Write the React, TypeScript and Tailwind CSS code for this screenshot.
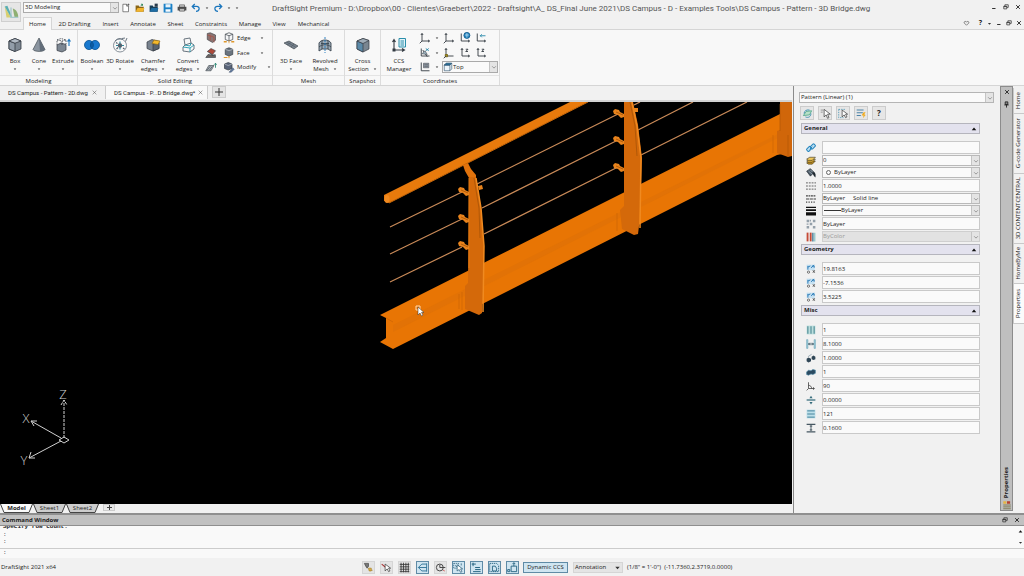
import { ReactNode, useState } from 'react'

interface IconProps {
  name: string
  className?: string
}

const INK = '#333a42'
const STEEL = '#7d8792'
const BLUE = '#1b76bd'

const glyphs: Record<string, ReactNode> = {
  box: (
    <g stroke={INK} strokeWidth="0.8" strokeLinejoin="round">
      <path d="M2 4l6-2.5L14 4v8l-6 2.5L2 12z" fill={STEEL} />
      <path d="M2 4l6 2.2v8.3L2 12z" fill="#929da9" />
      <path d="M2 4l6-2.5L14 4 8 6.2z" fill="#b3bcc6" />
    </g>
  ),
  cone: (
    <g>
      <path d="M8 1l6 11.5C13 15 3 15 2 12.5z" fill="#8b95a0" stroke={INK} strokeWidth="0.6" />
      <path d="M8 1l1 13.3c3 0 4.600-.8 5-1.800z" fill="#626d79" />
    </g>
  ),
  extrude: (
    <g>
      <path d="M2 8l4-2 5 1.500v5.500l-4 2-5-1.500z" fill={STEEL} stroke={INK} strokeWidth="0.7" />
      <path d="M2 8V3l4-1.500L11 3v4M7 4v5M2 3l5 1 4-1" fill="none" stroke={INK} strokeWidth="0.8" strokeDasharray="1.500 1" />
      <path d="M14 9V3M12.500 4.500L14 2.500l1.500 2" fill="none" stroke={BLUE} strokeWidth="1.100" />
    </g>
  ),
  boolean: (
    <g fill="#1878ce" stroke="#07508f" strokeWidth="0.8">
      <ellipse cx="5" cy="8" rx="4.500" ry="4.600" />
      <ellipse cx="11" cy="8" rx="4.500" ry="4.600" />
      <path d="M8 4.800c-2 2-2 4.600 0 6.500 2-2 2-4.500 0-6.500z" fill="#0b5ca5" />
    </g>
  ),
  rotate: (
    <g fill="none">
      <circle cx="8" cy="8.500" r="6.500" stroke="#6b7681" strokeWidth="0.8" />
      <path d="M3 4a6.500 6.500 0 0 1 8-1.500M13.500 4.500L15 1M10 1.500l3-.5" stroke="#6b7681" />
      <path d="M4 8.500h8M8 4.500v8" stroke="#2a8fa3" strokeWidth="1.200" />
      <circle cx="8" cy="8.500" r="2.200" fill="#56616d" />
      <path d="M4 5.500l1.500 1M11 11l1.500 1M4.500 12l1.500-1.500" stroke="#56616d" strokeWidth="1.200" />
    </g>
  ),
  chamfer: (
    <g stroke={INK} strokeWidth="0.7" strokeLinejoin="round">
      <path d="M2 5l5-2.500 7 2v7l-6 2.500-6-2.500z" fill="#78828e" />
      <path d="M8 7v7l6-2.500V6z" fill="#59636f" />
      <path d="M7 6.500L9 3l6 1-2 3.500z" fill="#f5b92b" stroke="#8d681a" />
    </g>
  ),
  convert: (
    <g fill="none" strokeWidth="0.9">
      <path d="M4 2l6-1 1 5-6 2zM5 8l-2 2v4l7 1 4-3V8l-3-2" stroke="#5a6672" />
      <path d="M3 10l7 1 4-3M10 11v4M5 8l5 1 1-3" stroke="#1d9aae" />
    </g>
  ),
  chamferSmall: (
    <g stroke={INK} strokeWidth="0.8">
      <path d="M3 2l4-1 7 3v7l-4 3-7-4z" fill="#8c7472" />
      <path d="M7 5l5 2v7M3 4l4 1v6" fill="none" stroke="#b34435" />
    </g>
  ),
  shell: (
    <g stroke={INK} strokeWidth="0.8">
      <path d="M1 14l3-4 10 1v3z" fill="#6c625f" />
      <path d="M3 6l5-4 6 3-4 5z" fill="#ae493a" />
      <path d="M5 7l5 4 4-1" fill="none" />
    </g>
  ),
  slab: (
    <g stroke={INK} strokeWidth="0.8">
      <path d="M1 13l4-7h7l-4 7z" fill="#aab1b9" />
      <path d="M3 12l4-5M6 12l4-5" fill="none" />
      <path d="M14 9V3M12 5l2-2 1.500 2" fill="none" stroke="#20806c" strokeWidth="1.100" />
    </g>
  ),
  edge: (
    <g>
      <path d="M3 3l5-2 5 2v7l-5 2-5-2zM3 3l5 2 5-2M8 5v7" fill="#f5f6f7" stroke={INK} strokeWidth="0.9" />
      <path d="M1 13h4M11 13h4" stroke="#e0972b" strokeWidth="2" />
      <path d="M8 11v4" stroke="#e0972b" />
    </g>
  ),
  face: (
    <g>
      <path d="M3 3l5-2 5 2v7l-5 2-5-2z" fill="#6a747f" stroke={INK} strokeWidth="0.9" />
      <path d="M3 3l5 2 5-2" fill="none" stroke="#ccd2d8" strokeWidth="0.8" />
      <path d="M1 14h5M8 12v3" stroke="#e0972b" strokeWidth="1.500" />
    </g>
  ),
  modify: (
    <g>
      <path d="M2 4l5-2 5 2v6l-5 2-5-2z" fill="#59657a" stroke={INK} strokeWidth="0.9" />
      <path d="M2 4l5 2 5-2" fill="none" stroke="#ccd2d8" strokeWidth="0.8" />
      <path d="M8 15l5-6 2 2-4 4z" fill="#60789c" stroke="#34435d" strokeWidth="0.5" />
    </g>
  ),
  face3d: (
    <g stroke={INK} strokeWidth="0.6">
      <path d="M1 6l5-2 9 5-4 3z" fill="#77828d" />
      <path d="M3.500 5l9 5M8 5.500L4 8M11 7l-3 3" fill="none" stroke="#4f5963" />
    </g>
  ),
  revolved: (
    <g stroke="#3b4650" strokeWidth="0.9">
      <path d="M2 6c2-4 10-4 12 0v8l-3-2H5l-3 2z" fill="#9caab6" />
      <path d="M5 3.500V12M11 3.500V12M2 10c3-3 9-3 12 0M4 6.500h8" fill="none" />
      <path d="M8 0v16" stroke={BLUE} strokeDasharray="2 1" />
    </g>
  ),
  section: (
    <g stroke={INK} strokeWidth="0.7" strokeLinejoin="round">
      <path d="M2 4l6-2.500 6 2v8.500l-6 3-6-3z" fill="#7a8691" />
      <path d="M2 4l6 2.500V15l-6-3z" fill="#5b8aa9" />
      <path d="M2 4l6-2.500 6 2L8 6.500z" fill="#a0adb8" />
    </g>
  ),
  ccs: (
    <g fill="none">
      <path d="M3 14V3M1.500 5L3 2.500 4.500 5M3 13h10M11 11.500l2.500 1.500-2.500 1.500" stroke={INK} strokeWidth="1.100" />
      <path d="M1.500 11.500h3v3h-3z" fill={INK} />
      <path d="M8 1.500h6.500V10H8z" fill="#e4f3f9" stroke="#2a8fab" />
      <path d="M9.500 4H13M9.500 6H13M9.500 8H13" stroke="#2a8fab" />
    </g>
  ),
  axes: (
    <g fill="none" stroke={INK} strokeWidth="1.200">
      <path d="M4 12V2M2.500 4L4 2l1.500 2M4 12h10M12 10.500l2 1.500-2 1.500M4 12l-3 3" />
    </g>
  ),
  axesGlobe: (
    <g fill="none" stroke={INK} strokeWidth="1.200">
      <path d="M3 12V2M3 12h11M12 10.500l2 1.500-2 1.500" />
      <circle cx="10.500" cy="4.500" r="4" fill="#2587c2" stroke="#175f8d" />
      <path d="M8 4h5M10.500 1.500v6" stroke="#e2f1fa" strokeWidth="0.8" />
    </g>
  ),
  axesBack: (
    <g fill="none" stroke={INK} strokeWidth="1.200">
      <path d="M3 12V2M3 12h11M12 10.500l2 1.500-2 1.500" />
      <path d="M14 5H7M9 3L7 5l2 2" stroke="#2487a8" />
    </g>
  ),
  axesView: (
    <g fill="none" stroke={INK} strokeWidth="1.200">
      <path d="M3 12V2M3 12h11M5 4l6 9" />
      <path d="M9 2l4 3M13 2L9 5" stroke="#2487a8" />
      <path d="M4 9l4-4 3 5z" fill="#9db3bf" strokeWidth="0.700" />
    </g>
  ),
  axesGold: (
    <g fill="none" stroke={INK} strokeWidth="1.200">
      <path d="M4 12V2M2.500 4L4 2l1.500 2M4 12h10" />
      <path d="M3 10h3v3H3z" fill="#a58f24" stroke="#776817" />
      <path d="M4 12l-3 3" />
    </g>
  ),
  axesZ: (
    <g fill="none" stroke={INK} strokeWidth="1.200">
      <path d="M4 12V2M2.500 4L4 2l1.500 2M4 12h10M12 10.500l2 1.500-2 1.500M9 3h3L9 6h3" />
    </g>
  ),
  axesList: (
    <g fill="none" stroke={INK} strokeWidth="1.200">
      <path d="M3 13V2M3 13h11" />
      <path d="M6 3h7v6H6z" fill="#9ba5af" strokeWidth="0.700" />
      <path d="M7 5h5M7 7h5" strokeWidth="0.700" />
    </g>
  ),
  cubeTop: (
    <g stroke="#31536f" strokeWidth="1">
      <path d="M2 5l3-3h9v9l-3 3H2z" fill="#eef5fa" />
      <path d="M2 5l3-3h9l-3 3z" fill="#2478a8" />
      <path d="M11 5v9M2 5h9" fill="none" />
    </g>
  ),
  fileNew: (
    <g fill="#fff" stroke="#444" strokeWidth="1">
      <path d="M3 2h6l3 3v9H3z" />
      <path d="M9 2v3h3M12 1v3M10.500 2.500h3" fill="none" />
    </g>
  ),
  open: (
    <g>
      <path d="M1 14V4h5l1 2h7v8z" fill="#8a6516" />
      <path d="M1 14l3-6h11l-2 6z" fill="#f2b42e" />
      <path d="M9 5l3-3m0 0H9.500M12 2v2.500" stroke="#1a7a49" strokeWidth="1.300" />
    </g>
  ),
  openBlue: (
    <g>
      <path d="M1 14V4h5l1 2h7v8z" fill="#173d57" />
      <path d="M1 14l3-6h11l-2 6z" fill="#1e6ca3" />
      <path d="M9 1h5v5H9z" fill="#2a3b4b" />
    </g>
  ),
  save: (
    <g>
      <path d="M1 1h13l1 1v13H1z" fill="#1b80c6" />
      <path d="M4 2h8v5H4z" fill="#e7f3fb" />
      <path d="M4 10h8v4H4z" fill="#f6fafd" />
    </g>
  ),
  print: (
    <g>
      <path d="M4 3h8v4H4z" fill="#d0d0d0" stroke="#444" />
      <path d="M1 6h14v6H1z" fill="#4a4a4a" />
      <path d="M4 9h8v4H4z" fill="#c8c8c8" stroke="#444" />
    </g>
  ),
  undo: <path d="M6 1.500L2 5.500l4 4M2.500 5.500H9c6 0 5 8-1 8" fill="none" stroke={BLUE} strokeWidth="2" />,
  redo: <path d="M10 1.500l4 4-4 4M13.500 5.500H7c-6 0-5 8 1 8" fill="none" stroke={BLUE} strokeWidth="2" />,
  minimize: <path d="M3 12h9" stroke="#222" strokeWidth="2.500" />,
  restore: (
    <g fill="none" stroke="#222" strokeWidth="1.800">
      <path d="M5 6V2h9v7h-4" />
      <path d="M2 6h8v7H2z" />
      <path d="M2 7h8" />
    </g>
  ),
  close: <path d="M3 3l10 10M13 3L3 13" stroke="#222" strokeWidth="2.400" />,
  closeThin: <path d="M2 2l12 12M14 2L2 14" stroke="#444" strokeWidth="1.500" />,
  heart: <path d="M8 12L3 7c-2-4 4-5 5-2 1-3 7-2 5 2z" fill="none" stroke="#444" strokeWidth="1.400" />,
  caret: <path d="M3 6h10l-5 6z" fill="#333" />,
  caretUp: <path d="M2 11h12L8 4z" fill="#111" />,
  chevron: <path d="M3 6l5 5 5-5" fill="none" stroke="#666" strokeWidth="1.600" />,
  pin: (
    <g stroke="#222" strokeWidth="2">
      <path d="M5 2h6v6H5z" fill="#888" />
      <path d="M3 9h10M8 9v6" />
    </g>
  ),
  quick: (
    <g>
      <path d="M2 11l4-6 8-1-3 6z" fill="#b9e0c7" stroke="#349b79" />
      <path d="M5 13c5 2 8-1 8-5M3 8c0-4 4-6 8-5" fill="none" stroke="#2a86ab" strokeWidth="1.200" />
    </g>
  ),
  pick: (
    <g stroke="#333">
      <path d="M1 3h4M1 6h3" stroke="#777" />
      <path d="M6 2v11l3-3 2 5 2-1-2-5h4z" fill="#fff" />
    </g>
  ),
  pickWindow: (
    <g stroke="#333">
      <path d="M1 2h9M1 2v12h7" fill="none" stroke="#2a86ab" strokeDasharray="2 1.500" />
      <path d="M6 3v10l3-3 2 4 2-1-2-4h3z" fill="#fff" />
    </g>
  ),
  filter: (
    <g>
      <path d="M1 3h10M1 7h9M1 11h6" stroke="#4c83a8" strokeWidth="1.600" />
      <path d="M11 6l3 0-2 3 2 1-4 5 1-4H8z" fill="#f0ac23" />
    </g>
  ),
  link: (
    <g fill="#bfe0f2" stroke="#2685bd" strokeWidth="1.600">
      <rect x="1" y="7" width="8" height="5" rx="1.500" transform="rotate(-45 5 9.500)" />
      <rect x="7" y="3" width="8" height="5" rx="1.500" transform="rotate(-45 11 5.500)" />
      <path d="M6 10l4-4" />
    </g>
  ),
  layers: (
    <g stroke="#3d3620" strokeWidth="1">
      <path d="M1 11l5-3h9l-5 5H4z" fill="#c7921d" />
      <path d="M1 8l5-3h9l-5 5H4z" fill="#e2b137" />
      <path d="M1 5l5-3h9l-5 5H4z" fill="#efc75a" />
    </g>
  ),
  paint: (
    <g>
      <path d="M1 5l6-4 6 6-6 6z" fill="#4b5965" stroke="#1f2830" />
      <path d="M10 6c5 0 6 4 5 9-3-2-4-5-5-9z" fill="#1f2830" />
      <path d="M4 5l6 5M7 3l4 4" stroke="#b9c6d1" />
    </g>
  ),
  scaleLines: (
    <g stroke="#666" strokeWidth="1.600" strokeDasharray="3 1.500">
      <path d="M0 3h16M0 8h16M0 13h16" />
    </g>
  ),
  lineStyle: (
    <g stroke="#444" strokeWidth="1.800">
      <path d="M0 3h16" strokeDasharray="3 1" />
      <path d="M0 8h16" strokeDasharray="5 1" />
      <path d="M0 13h16" strokeDasharray="2 2" />
    </g>
  ),
  lineWeight: <path d="M0 1h16v2H0zM0 5h16v3H0zM0 10h16v5H0z" fill="#111" />,
  transparency: (
    <path d="M1 1h4v4H1zM11 1h4v4h-4zM6 6h4v4H6zM1 11h4v4H1zM11 11h4v4h-4zM6 1h2v3H6zM1 7h3v2H1z" fill="#94a0aa" />
  ),
  swatches: (
    <g>
      <path d="M1 1h3v14H1z" fill="#c54a36" />
      <path d="M6 1h3v14H6z" fill="#c54a36" />
      <path d="M10 1h2v14h-2z" fill="#2f6d8a" />
      <path d="M13 1h2v14h-2z" fill="#8cc3c4" />
    </g>
  ),
  coord: (
    <g>
      <path d="M1 1h13v9H1z" fill="#c6e1f2" />
      <path d="M3 9V3M3 5l4-2M8 6l5-4M10 3h3v3" stroke="#2778b4" strokeWidth="1.500" fill="none" />
      <circle cx="4" cy="13" r="1.800" fill="none" stroke="#333" />
      <path d="M11 10l3 4M14 10l-3 4" stroke="#333" strokeWidth="1.200" />
    </g>
  ),
  columns: (
    <g>
      <path d="M1 1h14v14H1z" fill="#bcdedd" />
      <path d="M3 2v12M8 2v12M13 2v12" stroke="#41808c" strokeWidth="1.600" />
    </g>
  ),
  spacing: (
    <g stroke="#35515f" strokeWidth="1.500" fill="none">
      <path d="M1 1h2v14H1zM13 1h2v14h-2z" fill="#9ccbd9" stroke="#6fa9bb" strokeWidth="1" />
      <path d="M4 8h8M6 6L4 8l2 2M10 6l2 2-2 2" />
    </g>
  ),
  twoParts: (
    <g fill="#2f4555">
      <path d="M1 9l3-2 4 2v4l-4 2-3-2zM9 6l3-2 3 2v4l-3 1-3-1z" />
      <path d="M3 6l6-4" stroke="#6b8494" />
    </g>
  ),
  joined: <path d="M1 8l3-3 4 1 3-2 4 1v5l-4 2-3-1-4 2-3-1z" fill="#2b4a60" stroke="#4782a0" />,
  angle: (
    <g fill="none" stroke="#444" strokeWidth="1.300">
      <path d="M4 2v10h10M4 7c3 0 5 2 5 5M1 15l3-3M12 10v4" />
    </g>
  ),
  divide: (
    <g fill="#356c7c">
      <path d="M1 7h14v2H1z" />
      <path d="M8 1l2.500 4h-5zM8 15l2.500-4h-5z" />
    </g>
  ),
  rows: (
    <g>
      <path d="M1 1h14v14H1z" fill="#bcdfe9" />
      <path d="M2 3h12M2 8h12M2 13h12" stroke="#407e99" strokeWidth="1.500" />
    </g>
  ),
  rowSpacing: (
    <g fill="none" stroke="#465762" strokeWidth="1.500">
      <path d="M1 2h14M1 14h14" strokeWidth="2" />
      <path d="M8 3v10M6 5h4M6 11h4" />
    </g>
  ),
  funnel: (
    <g stroke="#444">
      <path d="M2 2h6v4l-2 3-2-3z" fill="#777" />
      <path d="M8 9h4v4H9zM12 12h2" fill="#e0b64c" stroke="#a47d22" />
    </g>
  ),
  snapPick: (
    <g stroke="#333">
      <path d="M1 3l6 5" stroke="#a33" strokeWidth="1.500" />
      <path d="M6 3v10l3-3 2 4 2-1-2-4h3z" fill="#fff" />
    </g>
  ),
  grid: <path d="M1 3.500h14M1 7h14M1 10.500h14M1 14h14M3 1v14M6.500 1v14M10 1v14M13.500 1v14" stroke="#333" strokeWidth="1.200" />,
  ortho: (
    <g fill="none" stroke="#2a6f94" strokeWidth="1.300">
      <path d="M14 2v12M14 3H7L2 8l5 5h7M2 8h12" />
    </g>
  ),
  polar: (
    <g fill="none" stroke="#444" strokeWidth="1.400">
      <circle cx="7" cy="8" r="5" />
      <path d="M7 4v4h8" />
      <path d="M12 12l2 1" stroke="#c44" />
    </g>
  ),
  esnap: (
    <g stroke="#1c526f">
      <path d="M1 2h7v7H1z" fill="none" strokeDasharray="2 1" />
      <path d="M6 4v9l3-2 2 4 2-1-2-4h3z" fill="#fff" />
      <path d="M3 5l3 2M12 2v3" />
    </g>
  ),
  etrack: (
    <g fill="none" stroke="#23627f" strokeWidth="1.400">
      <path d="M1 3h6M3 1v5M6 8h7M6 11h8M3 14h11" />
    </g>
  ),
  quickInput: (
    <g fill="none" stroke="#23627f" strokeWidth="1.300">
      <path d="M1 2h10l3 3v9H1z" strokeDasharray="2 1" />
      <path d="M5 6h4l2 3v4H5z" />
    </g>
  ),
  lineweight: (
    <g fill="none" stroke="#23627f" strokeWidth="1.300">
      <path d="M6 6h8v8H6zM10 6V1M8 3l2-2 2 2M1 11h3v3H1z" />
    </g>
  ),
  palette: (
    <g>
      <path d="M2 2h5v4H2z" fill="#e6b442" />
      <path d="M8 2h5v4H8z" fill="#b7412f" />
      <path d="M2 8h12M2 11h12M2 14h12" stroke="#746f42" strokeWidth="1.300" />
    </g>
  ),
}

function Icon({ name, className = 'size-3' }: IconProps) {
  return (
    <svg viewBox="0 0 16 16" className={`block shrink-0 ${className}`} aria-hidden="true">
      {glyphs[name]}
    </svg>
  )
}

function DropArrow() {
  return (
    <span className="pointer-events-none flex h-full w-2 shrink-0 items-center justify-center border-l border-[#c4c4c4] bg-[#e4e4e4]">
      <Icon name="chevron" className="size-[6px]" />
    </span>
  )
}

function RibbonButton({ icon, lines, width, caret = true }: { icon: string; lines: string[]; width: string; caret?: boolean }) {
  return (
    <button className={`flex shrink-0 flex-col items-center pt-[7px] ${width}`}>
      <Icon name={icon} className="mb-1 size-4" />
      <span className="whitespace-nowrap">{lines[0]}</span>
      {lines[1] ? (
        <span className="flex items-center gap-1 whitespace-nowrap">
          {lines[1]}
          {caret && <Icon name="caret" className="size-1" />}
        </span>
      ) : (
        caret && <Icon name="caret" className="mt-0.5 size-1" />
      )}
    </button>
  )
}

function RibbonGroup({ title, width, children }: { title: string; width: string; children: ReactNode }) {
  return (
    <section className={`flex shrink-0 flex-col border-r border-[#dcdcdc] ${width}`}>
      <div className="flex h-[45px] shrink-0 items-stretch">{children}</div>
      <h2 className="border-t border-[#e4e4e4] text-center leading-[10px]">{title}</h2>
    </section>
  )
}

function SmallTool({ icon, caret }: { icon: string; caret?: boolean }) {
  return (
    <button className="flex items-center gap-1" aria-label={icon}>
      <Icon name={icon} />
      {caret && <Icon name="caret" className="size-1" />}
    </button>
  )
}

interface Field {
  icon: string
  label: string
  value: string
  kind?: 'select'
  mark?: 'circle' | 'line'
  disabled?: boolean
}

const general: Field[] = [
  { icon: 'link', label: 'Hyperlink', value: '' },
  { icon: 'layers', label: 'Layer', value: '0', kind: 'select' },
  { icon: 'paint', label: 'Line color', value: 'ByLayer', kind: 'select', mark: 'circle' },
  { icon: 'scaleLines', label: 'Line scale', value: '1.0000' },
  { icon: 'lineStyle', label: 'Line style', value: 'ByLayer\u00a0\u00a0\u00a0\u00a0\u00a0Solid line', kind: 'select' },
  { icon: 'lineWeight', label: 'Line weight', value: 'ByLayer', kind: 'select', mark: 'line' },
  { icon: 'transparency', label: 'Transparency', value: 'ByLayer' },
  { icon: 'swatches', label: 'Print style', value: 'ByColor', kind: 'select', disabled: true },
]

const geometry: Field[] = [
  { icon: 'coord', label: 'Position X', value: '19.8163' },
  { icon: 'coord', label: 'Position Y', value: '-7.1536' },
  { icon: 'coord', label: 'Position Z', value: '3.5225' },
]

const misc: Field[] = [
  { icon: 'columns', label: 'Columns', value: '1' },
  { icon: 'spacing', label: 'Column spacing', value: '8.1000' },
  { icon: 'twoParts', label: 'Level spacing', value: '1.0000' },
  { icon: 'joined', label: 'Levels', value: '1' },
  { icon: 'angle', label: 'Axis angle', value: '90' },
  { icon: 'divide', label: 'Row elevation', value: '0.0000' },
  { icon: 'rows', label: 'Rows', value: '121' },
  { icon: 'rowSpacing', label: 'Row spacing', value: '0.1600' },
]

function PropertyRow({ field }: { field: Field }) {
  return (
    <div className="flex items-center gap-1.5 pl-[5px]">
      <Icon name={field.icon} className="size-[10px]" />
      {field.kind === 'select' ? (
        <div className={`flex h-[11px] min-w-0 flex-1 items-center border ${field.disabled ? 'border-[#cfcfcf] bg-[#e2e2e2] text-[#9a9a9a]' : 'border-[#b9b9b9] bg-[#fafafa]'}`}>
          {field.mark === 'circle' && <span className="mx-[3px] size-[5px] rounded-full border border-[#666]" />}
          {field.mark === 'line' && <span className="ml-px w-[17px] border-t border-[#333]" />}
          <select
            aria-label={field.label}
            disabled={field.disabled}
            className="-my-px h-[11px] min-w-0 flex-1 appearance-none bg-transparent leading-[11px]"
          >
            <option>{field.value}</option>
          </select>
          <DropArrow />
        </div>
      ) : (
        <input
          aria-label={field.label}
          defaultValue={field.value}
          className="h-[13px] min-w-0 flex-1 border border-[#c9c9c9] bg-[#fafafa] leading-[11px]"
        />
      )}
    </div>
  )
}

function PropertySection({ title, fields }: { title: string; fields: Field[] }) {
  const [open, setOpen] = useState(true)
  return (
    <section className="mb-0.5">
      <button
        onClick={() => setOpen(!open)}
        className="flex h-[11px] w-full items-center justify-between border border-[#b5b5bd] bg-[#e3e2ee] px-0.5 leading-[9px] font-bold"
      >
        {title}
        <Icon name="caretUp" className="size-[6px]" />
      </button>
      {open && (
        <div className="flex flex-col gap-px pt-[7px]">
          {fields.map((field) => (
            <PropertyRow key={field.label} field={field} />
          ))}
        </div>
      )}
    </section>
  )
}

function Clamp({ x, y }: { x: number; y: number }) {
  return (
    <g transform={`translate(${x} ${y})`}>
      <path d="M-3 -4l4 1 1 2 4 2v3l-3 1-3-3-4-1-1-3z" fill="#e8831c" />
      <path d="M-2 -1l7 3" stroke="#a45306" strokeWidth="0.8" />
    </g>
  )
}

function Viewport() {
  return (
    <svg viewBox="0 102 792 402" preserveAspectRatio="xMinYMin slice" className="block size-full" role="img" aria-label="3D bridge model">
      <g stroke="#c98a58" strokeWidth="1.200">
        <path d="M390 227L462 192M390 254L462 219M390 282L462 247" />
        <path d="M477 184L618 114M482 208L618 140M484 234L618 167" />
        <path d="M634 105l6-3M638 130l55-28M641 155l106-53" />
      </g>
      {/* beam */}
      <path d="M380 315L780 114 792 108V152L777 155 393 349 380 342 386 338V318z" fill="#e87504" />
      <path d="M393 325L780 133V137L393 332z" fill="#db6f08" opacity="0.500" />
      <path d="M386 318l7 4" fill="none" stroke="#d66a04" />
      <path d="M462 292v18M459 294v15M617 213v18M773 135v18" stroke="#c96504" opacity="0.600" />
      {/* hand rail */}
      <path d="M384 195L570 102h18L389 203l-5-2z" fill="#e87a0c" />
      <path d="M389 203L588 102" stroke="#c2650b" />
      <ellipse cx="387" cy="199" rx="2.500" ry="4" fill="#f08a20" />
      {/* posts */}
      <path d="M463 165l5-2 3 6 5 6v3h-7l-4-7z" fill="#e0720c" />
      <path d="M469 177h7l5 30 3 40v16l-2 50-3 2-14-6v-23l3-3z" fill="#d4690a" />
      <path d="M476 178l5 30 3 38-1 66" fill="none" stroke="#f08a20" strokeWidth="1.500" />
      <path d="M474 178l5 30 1 30" fill="none" stroke="#a85408" strokeWidth="0.800" />
      <path d="M469 178v90" stroke="#e07810" />
      <path d="M624 102h9l5 23 4 33-1 27-2 41-1 8-4 1-12-6-2-19 4-4z" fill="#d4690a" />
      <path d="M632 102l5 24 4 32-1 70" fill="none" stroke="#f08a20" strokeWidth="1.500" />
      <path d="M630 102l5 24 2 30" fill="none" stroke="#a85408" strokeWidth="0.800" />
      <path d="M780 102h12v54l-4 1-11-4v-22l3-1z" fill="#d0660a" />
      <path d="M780 104v27M788 135v22" stroke="#ac5504" opacity="0.600" />
      <Clamp x={463} y={191} />
      <Clamp x={463} y={218} />
      <Clamp x={463} y={245} />
      <Clamp x={618} y={113} />
      <Clamp x={618} y={140} />
      <Clamp x={618} y={167} />
      <path d="M478 186l4-1 1 4-4 1zM633 108l5 0v4l-4 0z" fill="#e8831c" />
      {/* axis triad */}
      <g fill="none" stroke="#d0d0d0" strokeWidth="1">
        <path d="M64 438V400M61 405l3-5 3 5" strokeDasharray="3 1" />
        <path d="M61 438L31 421M37 421l-6 0 3 5M61 441L29 458M31 452l-2 6h6" />
        <path d="M59 440l5-3 5 3-5 3z" />
      </g>
      <g fill="#d0d0d0" fontFamily="Open Sans, sans-serif" fontWeight="300" fontSize="13" textAnchor="middle">
        <text x="63" y="399">Z</text>
        <text x="26" y="423">X</text>
        <text x="24" y="465">Y</text>
      </g>
      {/* pointer */}
      <path d="M416 306h4v4h-4z" fill="none" stroke="#ffd9ae" />
      <path d="M418 307v8l2-2 1.500 3 1.500-1-1.500-2.500h2.500z" fill="#fff" stroke="#333" strokeWidth="0.500" />
    </svg>
  )
}

function SheetTab({ name, active, onSelect }: { name: string; active: boolean; onSelect: () => void }) {
  return (
    <button onClick={onSelect} className={`flex h-[9px] items-center ${active ? 'font-bold' : ''}`}>
      <svg viewBox="0 0 5 9" className="h-[9px] w-[5px]" aria-hidden="true">
        <path d="M0 0h5v9H4z" fill={active ? '#fafafa' : '#cdcdcd'} />
        <path d="M.5 0L4 8.500h1" fill="none" stroke="#444" />
      </svg>
      <span className={`h-[9px] w-[23px] text-center leading-[9px] shadow-[inset_0_-1px_0_#444] ${active ? 'bg-[#fafafa]' : 'bg-[#cdcdcd]'}`}>{name}</span>
      <svg viewBox="0 0 5 9" className="h-[9px] w-[5px]" aria-hidden="true">
        <path d="M0 0h5L1 9H0z" fill={active ? '#fafafa' : '#cdcdcd'} />
        <path d="M0 8.500h1L4.500 0" fill="none" stroke="#444" />
      </svg>
    </button>
  )
}

const menus = [
  { name: 'Home', width: 'w-[29px]' },
  { name: '2D Drafting', width: 'w-[45px]' },
  { name: 'Insert', width: 'w-[27px]' },
  { name: 'Annotate', width: 'w-[38px]' },
  { name: 'Sheet', width: 'w-[27px]' },
  { name: 'Constraints', width: 'w-[44px]' },
  { name: 'Manage', width: 'w-[34px]' },
  { name: 'View', width: 'w-[24px]' },
  { name: 'Mechanical', width: 'w-[45px]' },
]

const sideTabs = [
  { name: 'Home', height: 'h-[26px]' },
  { name: 'G-code Generator', height: 'h-[60px]' },
  { name: '3D CONTENTCENTRAL', height: 'h-[70px]' },
  { name: 'HomeByMe', height: 'h-[40px]' },
  { name: 'Properties', height: 'h-[40px]' },
]

const statusTools = [
  { icon: 'funnel', on: false },
  { icon: 'snapPick', on: false },
  { icon: 'grid', on: false },
  { icon: 'ortho', on: true },
  { icon: 'polar', on: false },
  { icon: 'esnap', on: true },
  { icon: 'etrack', on: true },
  { icon: 'quickInput', on: true },
  { icon: 'lineweight', on: true },
]

export default function App() {
  const [menu, setMenu] = useState('Home')
  const [sheet, setSheet] = useState('Model')
  const [sideTab, setSideTab] = useState('Properties')

  return (
    <div className="flex h-screen flex-col overflow-hidden bg-[#f1f1f1] font-['Open_Sans',sans-serif] text-[6px] leading-[8px] text-[#222]">
      {/* Title bar and menu */}
      <header className="flex h-[30px] shrink-0 border-b border-[#d5d5d5]">
        <button aria-label="Application menu" className="mt-0.5 ml-px flex size-5 items-center justify-center border border-[#cfcfcf] bg-[#e6e6e6]">
          <svg viewBox="0 0 20 20" className="size-[18px]" aria-hidden="true">
            <path d="M3 4l7 12H5z" fill="#d8cf70" />
            <path d="M3 4l3-1 5 12-1 1z" fill="#5aaeb2" />
            <path d="M12 6c4 1 6 5 6 10h-4z" fill="#8eaf72" />
            <path d="M10 5v11h8" fill="none" stroke="#a7c9cc" strokeWidth="1.500" />
          </svg>
        </button>
        <div className="ml-0.5 flex min-w-0 flex-1 flex-col">
          <div className="flex h-[17px] items-center">
            <div className="mb-0.5 flex h-[11px] w-24 shrink-0 items-center border border-[#aaa] bg-[#fafafa]">
              <select aria-label="Workspace" className="-my-px h-[11px] min-w-0 flex-1 appearance-none pl-px leading-[11px]">
                <option>3D Modeling</option>
              </select>
              <DropArrow />
            </div>
            <div className="ml-0.5 flex w-[151px] shrink-0 items-center gap-1 pb-0.5">
              {['fileNew', 'open', 'openBlue', 'save', 'print', 'undo'].map((name) => (
                <button key={name} aria-label={name}>
                  <Icon name={name} className="size-[10px]" />
                </button>
              ))}
              <Icon name="caret" className="size-1" />
              <button aria-label="redo">
                <Icon name="redo" className="size-[10px]" />
              </button>
              <Icon name="caret" className="size-1" />
              <Icon name="caret" className="size-1" />
            </div>
            <h1 className="min-w-0 flex-1 truncate font-['Roboto',sans-serif] text-[8px] leading-3 text-[#555]">
              DraftSight Premium - D:\Dropbox\00 - Clientes\Graebert\2022 - Draftsight\A_ DS_Final June 2021\DS Campus - D - Examples Tools\DS Campus - Pattern - 3D Bridge.dwg
            </h1>
            <div className="flex shrink-0 gap-1 pr-0.5 pb-1">
              {['minimize', 'restore', 'close'].map((name) => (
                <button key={name} aria-label={name} className="px-px">
                  <Icon name={name} className="size-[6px]" />
                </button>
              ))}
            </div>
          </div>
          <nav className="flex h-3 items-stretch">
            {menus.map((item) => (
              <button
                key={item.name}
                onClick={() => setMenu(item.name)}
                className={`h-[13px] whitespace-nowrap ${item.width} ${menu === item.name ? 'border border-b-0 border-[#d5d5d5] bg-[#f8f8f8]' : ''}`}
              >
                {item.name}
              </button>
            ))}
            <div className="ml-auto flex items-center gap-[3px] pr-0.5">
              <button aria-label="Favorites" className="mr-1">
                <Icon name="heart" className="size-[7px]" />
              </button>
              <button className="px-0.5 text-[7px] leading-[10px] font-bold">?</button>
              <Icon name="caret" className="mr-px size-[5px]" />
              <Icon name="minimize" className="size-[6px]" />
              <Icon name="restore" className="mx-px size-[6px]" />
              <Icon name="close" className="size-[6px]" />
            </div>
          </nav>
        </div>
      </header>

      {/* Ribbon */}
      <div className="flex h-14 shrink-0 border-b border-[#d5d5d5] bg-[#f8f8f8]">
        <RibbonGroup title="Modeling" width="w-[78px]">
          <div className="flex pl-[3px]">
            <RibbonButton icon="box" lines={['Box']} width="w-6" />
            <RibbonButton icon="cone" lines={['Cone']} width="w-6" />
            <RibbonButton icon="extrude" lines={['Extrude']} width="w-6" />
          </div>
        </RibbonGroup>
        <RibbonGroup title="Solid Editing" width="w-[195px]">
          <RibbonButton icon="boolean" lines={['Boolean']} width="w-7" />
          <RibbonButton icon="rotate" lines={['3D Rotate']} width="w-7" />
          <RibbonButton icon="chamfer" lines={['Chamfer', 'edges']} width="w-[38px]" />
          <RibbonButton icon="convert" lines={['Convert', 'edges']} width="w-[32px]" />
          <div className="flex flex-col justify-between py-0.5 pl-px">
            {['chamferSmall', 'shell', 'slab'].map((name) => (
              <SmallTool key={name} icon={name} />
            ))}
          </div>
          <div className="flex flex-1 flex-col justify-between py-0.5 pl-1.5">
            {['Edge', 'Face', 'Modify'].map((name) => (
              <button key={name} className="flex items-center gap-0.5">
                <Icon name={name.toLowerCase()} className="size-3" />
                <span className={`text-left ${name === 'Modify' ? 'w-7' : 'w-[21px]'}`}>{name}</span>
                <Icon name="caret" className="size-1" />
              </button>
            ))}
          </div>
        </RibbonGroup>
        <RibbonGroup title="Mesh" width="w-[72px]">
          <RibbonButton icon="face3d" lines={['3D Face']} width="w-9" />
          <RibbonButton icon="revolved" lines={['Revolved', 'Mesh']} width="w-8" />
        </RibbonGroup>
        <RibbonGroup title="Snapshot" width="w-9">
          <RibbonButton icon="section" lines={['Cross', 'Section']} width="w-full" />
        </RibbonGroup>
        <RibbonGroup title="Coordinates" width="w-[119px]">
          <RibbonButton icon="ccs" lines={['CCS', 'Manager']} width="w-9" caret={false} />
          <div className="flex flex-1 flex-col justify-between py-0.5 pl-0.5">
            <div className="flex gap-1">
              <SmallTool icon="axes" caret />
              <SmallTool icon="axes" />
              <SmallTool icon="axesGlobe" />
              <SmallTool icon="axesBack" />
            </div>
            <div className="flex gap-1">
              <SmallTool icon="axesView" caret />
              <SmallTool icon="axesGold" />
              <SmallTool icon="axesZ" />
              <SmallTool icon="axesZ" />
            </div>
            <div className="flex items-center">
              <SmallTool icon="axesList" caret />
              <div className="ml-[3px] flex h-3 w-14 items-center border border-[#aaa] bg-[#fafafa]">
                <Icon name="cubeTop" className="size-[10px]" />
                <select aria-label="View" className="-my-px h-3 min-w-0 flex-1 appearance-none leading-3">
                  <option>Top</option>
                </select>
                <DropArrow />
              </div>
            </div>
          </div>
        </RibbonGroup>
      </div>

      <div className="flex min-h-0 flex-1">
        {/* Drawing area */}
        <main className="flex min-w-0 flex-1 flex-col">
          <div className="flex h-4 shrink-0 items-start border-b-2 border-[#d2d2d2] font-['Roboto',sans-serif]">
            <button className="flex h-[13px] w-[106px] items-center justify-between border-r border-[#ccc] pr-2 pl-2 whitespace-nowrap">
              DS Campus - Pattern - 2D.dwg
              <Icon name="closeThin" className="size-[5px]" />
            </button>
            <button className="flex h-[13px] w-[102px] items-center justify-between border-r border-[#ccc] bg-[#f9f9f9] pr-1 pl-2 whitespace-nowrap">
              DS Campus - P...D Bridge.dwg*
              <Icon name="closeThin" className="size-[5px]" />
            </button>
            <button aria-label="New drawing" className="ml-1 flex h-3 w-[14px] items-center justify-center border border-[#ccc] bg-[#e4e4e4]">
              <svg viewBox="0 0 8 8" className="size-2" aria-hidden="true">
                <path d="M4 0v8M0 4h8" stroke="#333" strokeWidth="1" />
              </svg>
            </button>
          </div>
          <div className="min-h-0 flex-1 bg-black">
            <Viewport />
          </div>
          <div className="flex h-[9px] shrink-0">
            {['Model', 'Sheet1', 'Sheet2'].map((name) => (
              <SheetTab key={name} name={name} active={sheet === name} onSelect={() => setSheet(name)} />
            ))}
            <button aria-label="New sheet" className="ml-1 flex h-[7px] w-3 items-center justify-center border border-[#ccc] bg-[#e8e8e8]">
              <svg viewBox="0 0 5 5" className="size-[5px]" aria-hidden="true">
                <path d="M2.500 0v5M0 2.500h5" stroke="#444" strokeWidth="1" />
              </svg>
            </button>
          </div>
        </main>

        {/* Properties palette */}
        <aside className="flex w-[232px] shrink-0">
          <div className="ml-px min-w-0 flex-1 border-l border-[#8a8a8a] pt-1.5 pl-[5px]">
            <div className="mr-1.5 flex h-[11px] items-center border border-[#b5b5b5] bg-[#fafafa]">
              <select aria-label="Selection" className="-my-px h-[11px] min-w-0 flex-1 appearance-none pl-px leading-[11px]">
                <option>Pattern (Linear) (1)</option>
              </select>
              <DropArrow />
            </div>
            <div className="my-[3px] flex gap-1 pl-px">
              {['quick', 'pick', 'pickWindow', 'filter'].map((name) => (
                <button key={name} aria-label={name} className="flex size-[14px] items-center justify-center border border-[#ccc] bg-[#e6e6e6]">
                  <Icon name={name} className="size-[11px]" />
                </button>
              ))}
              <button className="size-[14px] border border-[#ccc] bg-[#e6e6e6] text-[8px] leading-3 font-bold">?</button>
            </div>
            <div className="mr-5 pl-0.5">
              <PropertySection title="General" fields={general} />
              <PropertySection title="Geometry" fields={geometry} />
              <PropertySection title="Misc" fields={misc} />
            </div>
          </div>
          <div className="mb-0.5 flex w-[13px] shrink-0 flex-col items-center border border-[#8c8c8c] bg-[#bfbfbf] pt-0.5">
            <button aria-label="Close palette">
              <Icon name="close" className="size-[6px]" />
            </button>
            <button aria-label="Pin palette" className="mt-1.5">
              <Icon name="pin" className="size-[7px]" />
            </button>
            <h2 className="mt-auto rotate-180 leading-[9px] font-bold [writing-mode:vertical-rl]">Properties</h2>
            <Icon name="palette" className="mt-0.5 size-[10px]" />
          </div>
          <div className="mt-0.5 flex w-[11px] shrink-0 flex-col">
            {sideTabs.map((tab) => (
              <button
                key={tab.name}
                onClick={() => setSideTab(tab.name)}
                className={`flex w-full items-center justify-start border-b border-l border-[#c9c9c9] ${tab.height} ${sideTab === tab.name ? 'bg-[#fbfbfb]' : ''}`}
              >
                <span className="rotate-180 leading-[9px] whitespace-nowrap [writing-mode:vertical-rl]">{tab.name}</span>
              </button>
            ))}
          </div>
        </aside>
      </div>

      {/* Command window */}
      <section className="flex h-[45px] shrink-0 flex-col">
        <div className="flex h-[13px] shrink-0 items-center border-t-2 border-b border-[#8f8f8f] bg-[#c1c1c1] pr-1 pl-0.5">
          <h2 className="flex-1 font-bold">Command Window</h2>
          <Icon name="restore" className="mr-1.5 size-[6px]" />
          <Icon name="close" className="size-[6px]" />
        </div>
        <div className="flex h-[23px] border-b border-[#ccc] bg-[#f9f9f9]">
          <div className="flex-1 overflow-hidden pl-[3px] font-['Liberation_Mono',monospace]">
            <p className="-mt-[3px] leading-[8px] font-bold">Specify row count:</p>
            <p className="leading-[7px]">:</p>
            <p className="leading-[7px]">:</p>
          </div>
          <div className="flex w-2 flex-col items-center justify-between py-[3px]">
            <Icon name="caretUp" className="size-[5px]" />
            <Icon name="caret" className="size-[5px]" />
          </div>
        </div>
        <label className="flex h-[9px] bg-[#f9f9f9] pl-[3px] font-['Liberation_Mono',monospace]">
          :<input aria-label="Command" className="h-2 min-w-0 flex-1" />
        </label>
      </section>

      {/* Status bar */}
      <footer className="flex h-[18px] shrink-0 items-center pl-px">
        <span className="w-[361px]">DraftSight 2021 x64</span>
        <div className="flex gap-[5px]">
          {statusTools.map((tool) => (
            <button
              key={tool.icon}
              aria-label={tool.icon}
              className={`flex size-[13px] items-center justify-center border ${tool.on ? 'border-[#5f8ba6] bg-[#cfe5f1]' : 'border-[#d5d5d5] bg-[#e4e4e4]'}`}
            >
              <Icon name={tool.icon} className="size-[11px]" />
            </button>
          ))}
        </div>
        <button className="ml-1 h-[11px] w-[45px] border border-[#5f8ba6] bg-[#cfe5f1] leading-[9px]">Dynamic CCS</button>
        <button className="ml-[5px] flex h-[11px] w-[50px] items-center justify-between border border-[#d5d5d5] bg-[#e4e4e4] px-px leading-[9px]">
          Annotation
          <Icon name="caret" className="size-[7px]" />
        </button>
        <span className="ml-1 whitespace-pre">{`(1/8" = 1'-0")  (-11.7360,2.3719,0.0000)`}</span>
      </footer>
    </div>
  )
}
